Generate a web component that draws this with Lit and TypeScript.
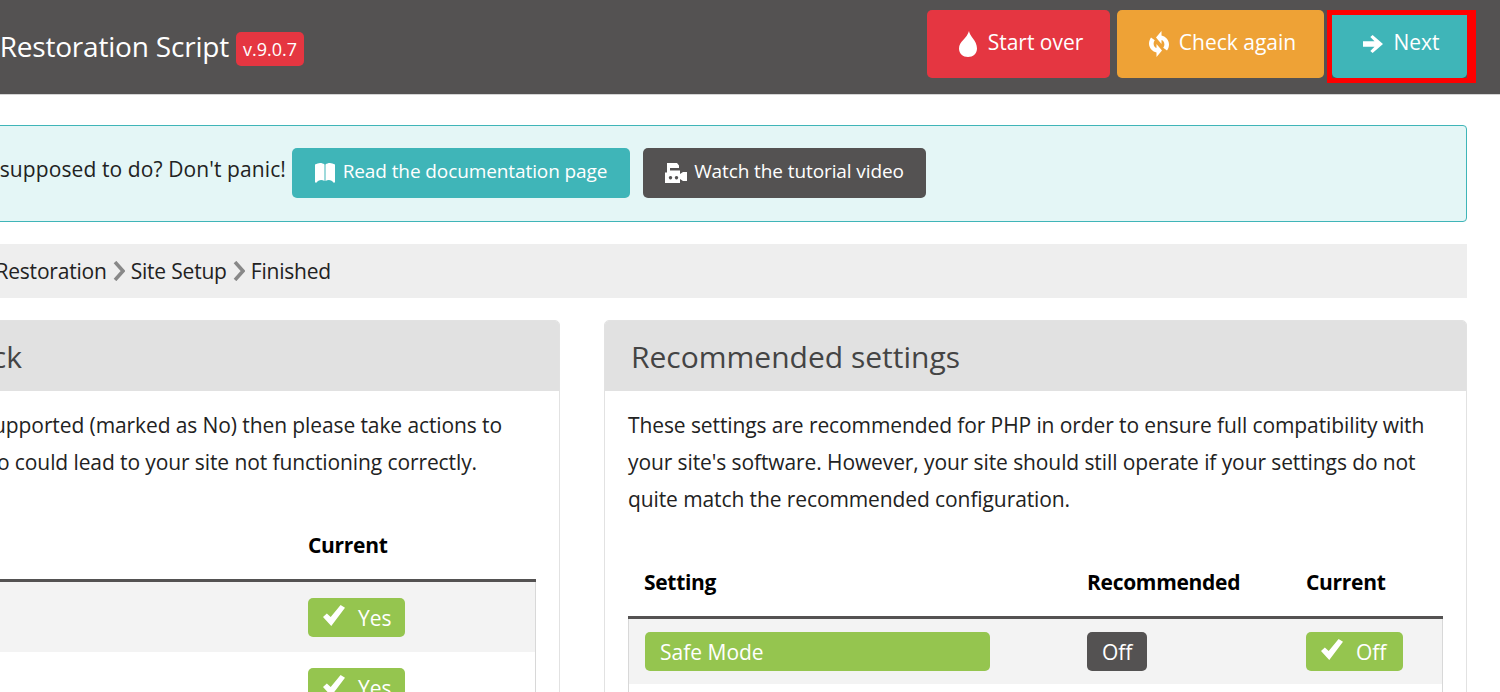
import { LitElement, html, css, svg } from "lit";
import { customElement } from "lit/decorators.js";

const icons = {
  tint: svg`<path d="M11 0c.4 5 8 9.500 8 17.500C19 22.500 15 26 10 26S1 22.500 1 17.500C1 10.500 9 7.500 11 0z"/>`,
  refresh: svg`<path d="M12.500 0v4.500c3.800.7 7.500 4.200 7.500 9 0 2.500-1 4.500-2 6l-3.800-2.800c.7-1 1.200-2 1.200-3.200 0-2.500-1.300-4-2.900-4.500V13L7 6.500zM7.500 26v-4.500C3.700 20.800 0 17.300 0 12.500c0-2.500 1-4.500 2-6l3.800 2.800c-.7 1-1.200 2-1.200 3.200 0 2.500 1.300 4 2.900 4.500V13l5.500 6.500z"/>`,
  arrow: svg`<path d="M0 6.200h11.500L7.300 2 9.600 0 20 9 9.600 18l-2.300-2 4.200-4.200H0z"/>`,
  book: svg`<path d="M0 2.500C3.500.5 7 .5 9.500 2.500V19C7 17.300 3.500 17.300 1 21l-1-1zM10.500 2.500C13 .5 16.500.5 20 2.500V20l-1 1c-2.500-3.700-6-3.700-8.500-2z"/>`,
  video: svg`<path fill-rule="evenodd" d="M2 0h10l2 2.500V5H5v2.500h10V11l3-2h4v9h-4l-3-2v4H0V9.500h2zM5.500 13a1.700 1.700 0 1 0 .01 0zM11.500 13a1.700 1.700 0 1 0 .01 0z"/>`,
  ok: svg`<path d="M0 11.500l3.500-3.500 3.500 3.500L16 0l4 2.500L7.500 20z"/>`,
};
type IconName = keyof typeof icons;
const boxes: Record<IconName, string> = {
  tint: "0 0 20 26",
  refresh: "0 0 20 26",
  arrow: "0 0 20 18",
  book: "0 0 20 22",
  video: "0 0 22 20",
  ok: "0 0 20 20",
};

@customElement("app-root")
export class AppRoot extends LitElement {
  static styles = css`
    :host {
      display: block;
      width: 1500px;
      height: 692px;
      overflow: hidden;
      background: #fff;
      font-family: "Open Sans", "Noto Sans", sans-serif;
      color: #222;
    }
    .icon { fill: currentColor; flex: none; display: block; }
    .i-tint { width: 20px; height: 26px; }
    .i-refresh { width: 20px; height: 26px; }
    .i-arrow { width: 20px; height: 18px; }
    .i-book { width: 20px; height: 22px; }
    .i-video { width: 22px; height: 20px; }
    .i-ok { width: 22px; height: 21px; }
    header {
      height: 94px;
      border-bottom: 1px solid #d4d4d4;
      background: #545252;
      display: flex;
      align-items: flex-start;
      padding-right: 33px;
      color: #fff;
    }
    .brand {
      flex: 1;
      min-width: 0;
      height: 94px;
      display: flex;
      align-items: center;
    }
    .title-clip {
      width: 229px;
      display: flex;
      justify-content: flex-end;
      white-space: nowrap;
      font-size: 28px;
      letter-spacing: -0.2px;
      padding-bottom: 2px;
    }
    .badge {
      margin-left: 7px;
      margin-top: 3px;
      height: 34px;
      width: 68px;
      border-radius: 5px;
      background: #e53641;
      font-size: 18px;
      display: flex;
      align-items: center;
      justify-content: center;
    }
    .actions { display: flex; padding-top: 10px; gap: 7px; }
    .btn {
      display: flex;
      align-items: center;
      justify-content: center;
      color: #fff;
      border-radius: 5px;
      white-space: nowrap;
    }
    .hbtn {
      height: 68px;
      padding: 0 0 4px 4px;
      box-sizing: border-box;
      font-size: 21px;
      gap: 10px;
    }
    .hbtn .icon { margin-top: 4px; }
    .red { background: #e53641; width: 183px; }
    .orange { background: #eea236; width: 207px; }
    .teal { background: #3fb5b8; }
    .dark { background: #545252; }
    .next-wrap { position: relative; width: 135px; margin-left: 1px; }
    .next { width: 135px; }
    .mark {
      position: absolute;
      left: -5px;
      top: 0;
      right: -9px;
      bottom: -5px;
      border: 5px solid #f00;
      border-right-width: 9px;
      pointer-events: none;
    }
    .content { margin-left: -303px; width: 1770px; }
    .alert {
      margin-top: 30px;
      height: 97px;
      box-sizing: border-box;
      border: 1px solid #3fb5b8;
      border-radius: 4px;
      background: #e4f6f6;
      display: flex;
      align-items: center;
      padding-bottom: 2px;
      font-size: 21px;
      letter-spacing: 0.1px;
    }
    .alert-text {
      width: 588px;
      display: flex;
      justify-content: flex-end;
      white-space: nowrap;
      padding-bottom: 8px;
    }
    .alert .btn {
      height: 50px;
      font-size: 19px;
      letter-spacing: -0.1px;
      box-sizing: border-box;
      padding-bottom: 4px;
    }
    .alert .btn .icon { margin-top: 4px; }
    .doc { width: 338px; margin-left: 6px; gap: 8px; }
    .vid { width: 283px; margin-left: 13px; gap: 7px; }
    .crumbs {
      margin-top: 22px;
      height: 54px;
      background: #eee;
      display: flex;
      align-items: center;
      font-size: 21px;
      letter-spacing: -0.2px;
      white-space: nowrap;
    }
    .crumb-clip { width: 634px; display: flex; justify-content: flex-end; align-items: center; }
    .sep { width: 12px; height: 20px; margin: 0 6px; fill: none; stroke: #888; stroke-width: 3.5; flex: none; }
    .panels { margin-top: 22px; display: flex; gap: 44px; }
    .panel {
      flex: 1;
      border: 1px solid #e2e2e2;
      border-radius: 5px 5px 0 0;
      height: 500px;
      box-sizing: border-box;
    }
    .panel h2 {
      margin: 0;
      height: 70px;
      background: #e1e1e1;
      font-weight: 400;
      font-size: 30px;
      color: #444;
      padding: 0 26px;
      line-height: 72px;
      white-space: nowrap;
      border-radius: 4px 4px 0 0;
    }
    .panel.left h2 { padding: 0; }
    .h2-clip { width: 324px; display: flex; justify-content: flex-end; }
    .body { padding: 16px 23px 0; }
    p { margin: 0; font-size: 21px; line-height: 37px; white-space: nowrap; letter-spacing: -0.1px; }
    .left p { display: flex; justify-content: flex-end; }
    .left p.l1 { width: 781px; }
    .left p.l2 { width: 756px; }
    table { width: 815px; border-collapse: separate; border-spacing: 0; table-layout: fixed; }
    th {
      text-align: left;
      padding: 46px 16px 16px;
      line-height: 36px;
      font-size: 21px;
      letter-spacing: -0.3px;
      font-weight: 700;
      color: #000;
      border-bottom: 3px solid #545252;
    }
    td { padding: 13px 16px; background: #f3f3f3; height: 39px; }
    .left td { padding: 16px 16px 15px; }
    tr td:first-child { border-left: 1px solid #d8d8d8; }
    tr td:last-child { border-right: 1px solid #d8d8d8; }
    tbody tr:nth-child(even) td { background: #fff; }
    .pill {
      display: inline-flex;
      align-items: center;
      height: 39px;
      box-sizing: border-box;
      border-radius: 5px;
      color: #fff;
      font-size: 21px;
      vertical-align: top;
      white-space: nowrap;
    }
    .green { background: #95c54f; }
    .ok { width: 97px; padding-left: 15px; gap: 13px; }
    .ok .icon { margin-top: -4px; }
    .gray { background: #545252; padding: 0 15px; }
    .wide { width: 345px; padding-left: 15px; }
  `;

  private icon(n: IconName) {
    return html`<svg class="icon i-${n}" viewBox=${boxes[n]} preserveAspectRatio="none" aria-hidden="true">${icons[n]}</svg>`;
  }
  private chevron() {
    return html`<svg class="sep" viewBox="0 0 12 20" aria-hidden="true"><path d="M2 1l8 9-8 9"/></svg>`;
  }
  private ok(text: string) {
    return html`<span class="pill green ok">${this.icon("ok")}${text}</span>`;
  }

  render() {
    return html`
      <header>
        <div class="brand">
          <div class="title-clip"><span>Akeeba Backup Site Restoration Script</span></div>
          <span class="badge">v.9.0.7</span>
        </div>
        <div class="actions">
          <div class="btn hbtn red">${this.icon("tint")}Start over</div>
          <div class="btn hbtn orange">${this.icon("refresh")}Check again</div>
          <div class="next-wrap">
            <div class="btn hbtn teal next">${this.icon("arrow")}Next</div>
            <div class="mark"></div>
          </div>
        </div>
      </header>
      <div class="content">
        <div class="alert">
          <div class="alert-text"><span>Don't know what you're supposed to do? Don't panic!</span></div>
          <div class="btn teal doc">${this.icon("book")}Read the documentation page</div>
          <div class="btn dark vid">${this.icon("video")}Watch the tutorial video</div>
        </div>
        <div class="crumbs">
          <div class="crumb-clip">
            <span>Check</span>${this.chevron()}<span>Restoration</span>${this.chevron()}<span>Site Setup</span>${this.chevron()}<span>Finished</span>
          </div>
        </div>
        <div class="panels">
          <section class="panel left">
            <h2><div class="h2-clip"><span>Pre-installation check</span></div></h2>
            <div class="body">
              <p class="l1"><span>If any of these requirements are not supported (marked as No) then please take actions to</span></p>
              <p class="l2"><span>correct them. Failure to do so could lead to your site not functioning correctly.</span></p>
              <table>
                <colgroup><col style="width:571px" /><col /></colgroup>
                <thead><tr><th>Setting</th><th>Current</th></tr></thead>
                <tbody>
                  <tr><td></td><td>${this.ok("Yes")}</td></tr>
                  <tr><td></td><td>${this.ok("Yes")}</td></tr>
                </tbody>
              </table>
            </div>
          </section>
          <section class="panel right">
            <h2>Recommended settings</h2>
            <div class="body">
              <p>These settings are recommended for PHP in order to ensure full compatibility with</p>
              <p>your site's software. However, your site should still operate if your settings do not</p>
              <p>quite match the recommended configuration.</p>
              <table>
                <colgroup><col style="width:443px" /><col style="width:219px" /><col /></colgroup>
                <thead><tr><th>Setting</th><th>Recommended</th><th>Current</th></tr></thead>
                <tbody>
                  <tr>
                    <td><span class="pill green wide">Safe Mode</span></td>
                    <td><span class="pill gray">Off</span></td>
                    <td>${this.ok("Off")}</td>
                  </tr>
                  <tr><td></td><td></td><td></td></tr>
                </tbody>
              </table>
            </div>
          </section>
        </div>
      </div>
    `;
  }
}
